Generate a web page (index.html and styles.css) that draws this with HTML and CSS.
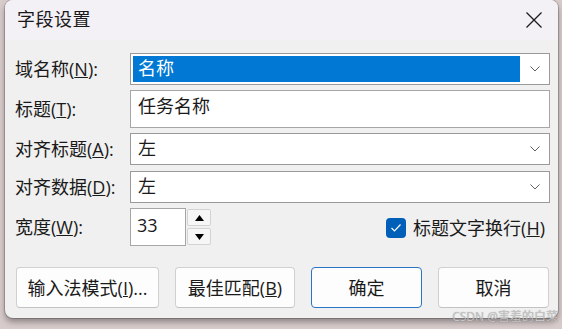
FILE: index.html
```html
<!DOCTYPE html>
<html lang="zh-CN">
<head>
<meta charset="utf-8">
<title>字段设置</title>
<link rel="stylesheet" href="styles.css">
</head>
<body>
<div class="desktop">
  <div class="window">
    <div class="titlebar">
      <span class="title">字段设置</span>
      <span class="close">
        <svg width="16" height="16" viewBox="0 0 16 16"><path d="M0.5 0.5 L15.5 15.5 M15.5 0.5 L0.5 15.5" stroke="#1a1a1a" stroke-width="1.3" fill="none"/></svg>
      </span>
    </div>
    <div class="body">
      <div class="row r-combo">
        <label class="lbl">域名称(<u>N</u>):</label>
        <div class="combo">
          <span class="value selected">名称</span>
          <span class="arrow"><svg width="10" height="6" viewBox="0 0 10 6"><path d="M0.5 0.5 L5 5 L9.5 0.5" stroke="#606060" stroke-width="1" fill="none"/></svg></span>
        </div>
      </div>
      <div class="row r-text">
        <label class="lbl">标题(<u>T</u>):</label>
        <div class="textbox">任务名称</div>
      </div>
      <div class="row r-combo gap6">
        <label class="lbl">对齐标题(<u>A</u>):</label>
        <div class="combo">
          <span class="value">左</span>
          <span class="arrow"><svg width="10" height="6" viewBox="0 0 10 6"><path d="M0.5 0.5 L5 5 L9.5 0.5" stroke="#606060" stroke-width="1" fill="none"/></svg></span>
        </div>
      </div>
      <div class="row r-combo">
        <label class="lbl">对齐数据(<u>D</u>):</label>
        <div class="combo">
          <span class="value">左</span>
          <span class="arrow"><svg width="10" height="6" viewBox="0 0 10 6"><path d="M0.5 0.5 L5 5 L9.5 0.5" stroke="#606060" stroke-width="1" fill="none"/></svg></span>
        </div>
      </div>
      <div class="row r-text r-width">
        <label class="lbl">宽度(<u>W</u>):</label>
        <div class="spin">
          <div class="spinbox">33</div>
          <div class="spinbtns">
            <span class="sbtn"><svg width="9" height="6" viewBox="0 0 9 6"><path d="M4.5 0 L9 6 L0 6 Z" fill="#000"/></svg></span>
            <span class="sbtn"><svg width="9" height="6" viewBox="0 0 9 6"><path d="M0 0 L9 0 L4.5 6 Z" fill="#000"/></svg></span>
          </div>
        </div>
        <label class="check">
          <span class="box"><svg width="12" height="10" viewBox="0 0 12 10"><path d="M1.5 5 L4.5 8 L10.5 1.5" stroke="#fff" stroke-width="1.2" fill="none"/></svg></span>
          <span>标题文字换行(<u>H</u>)</span>
        </label>
      </div>
      <div class="buttons">
        <button class="btn b1">输入法模式(<u>I</u>)...</button>
        <button class="btn b2">最佳匹配(<u>B</u>)</button>
        <button class="btn b3 default">确定</button>
        <button class="btn b4">取消</button>
      </div>
    </div>
  </div>
  <div class="watermark">CSDN @害羞的白菜</div>
</div>
</body>
</html>
```

FILE: styles.css
```css
* { box-sizing: border-box; }
html, body { margin: 0; padding: 0; }
body {
  font-family: "Open Sans", "Noto Sans CJK SC", sans-serif;
  color: #1a1a1a;
}
.desktop {
  position: relative;
  width: 562px;
  height: 329px;
  background: #d8cbcc;
  overflow: hidden;
}
.window {
  margin-left: 5px;
  width: 553px;
  height: 318px;
  background: #f0f0f0;
  border-radius: 8px;
  box-shadow: 0 0 0 1px rgba(0,0,0,0.18), 0 4px 6px rgba(0,0,0,0.35);
  overflow: hidden;
}
.titlebar {
  height: 40px;
  background: #f3f0f6;
  display: flex;
  align-items: center;
  justify-content: space-between;
  padding: 0 16px 2px 12px;
}
.title {
  font-size: 18px;
  line-height: 20px;
  letter-spacing: 0.5px;
}
.close { display: flex; margin-top: 1px; }
.body {
  padding: 13px 8px 10px 10px;
}
.row {
  display: flex;
  align-items: center;
}
.lbl {
  width: 115px;
  flex: none;
  font-size: 18px;
  line-height: 20px;
  white-space: nowrap;
}
.r-combo { height: 32px; margin-bottom: 5px; }
.r-text { height: 38px; margin-bottom: 5px; }
.gap6 { margin-bottom: 6px; }
.combo {
  flex: 1;
  height: 100%;
  border: 1px solid #9a9a9a;
  background: #fff;
  display: flex;
  align-items: stretch;
  padding: 2px 0 2px 2px;
}
.value {
  flex: 1;
  font-size: 18px;
  line-height: 25px;
  padding-left: 5px;
}
.value.selected {
  background: #0078d4;
  color: #fff;
}
.arrow {
  width: 29px;
  flex: none;
  display: flex;
  align-items: center;
  justify-content: center;
  padding-left: 1px;
}
.textbox {
  flex: 1;
  height: 100%;
  border: 1px solid #a6a6a6;
  background: #fff;
  font-size: 18px;
  line-height: 20px;
  padding: 5px 0 0 7px;
}
.r-width { margin-bottom: 21px; }
.spin {
  display: flex;
  height: 100%;
  flex: 1;
}
.spinbox {
  width: 56px;
  height: 38px;
  border: 1px solid #a6a6a6;
  background: #fff;
  font-size: 18px;
  line-height: 20px;
  padding: 6px 0 0 6px;
}
.spinbtns {
  margin-left: 1px;
  padding-top: 1px;
  display: flex;
  flex-direction: column;
  gap: 2px;
}
.sbtn {
  width: 24px;
  height: 17px;
  background: #f6f6f6;
  border: 1px solid #d3d3d3;
  border-radius: 2px;
  display: flex;
  align-items: center;
  justify-content: center;
}
.check {
  display: flex;
  align-items: center;
  gap: 7px;
  font-size: 18px;
  line-height: 20px;
  margin-right: 5px;
  margin-top: 2px;
}
.box {
  width: 20px;
  height: 20px;
  border-radius: 4px;
  background: #005fb8;
  display: flex;
  align-items: center;
  justify-content: center;
}
.buttons {
  display: flex;
  gap: 16px;
  padding-left: 1px;
}
.btn {
  height: 41px;
  background: #fdfdfd;
  border: 1px solid #d0d0d0;
  border-bottom-color: #c2c2c2;
  border-radius: 4px;
  font-family: inherit;
  font-size: 18px;
  line-height: 20px;
  color: #1a1a1a;
  padding: 0;
  white-space: nowrap;
}
.b1 { width: 143px; }
.b2 { width: 120px; }
.b3 { width: 111px; }
.b4 { width: 111px; }
.btn.default { border: 1px solid #2a74c6; }
.watermark {
  position: absolute;
  right: 4px;
  bottom: 5px;
  font-size: 12px;
  line-height: 14px;
  color: #c4c4c4;
  text-shadow: 0 0 1px rgba(0,0,0,0.3);
}
```
